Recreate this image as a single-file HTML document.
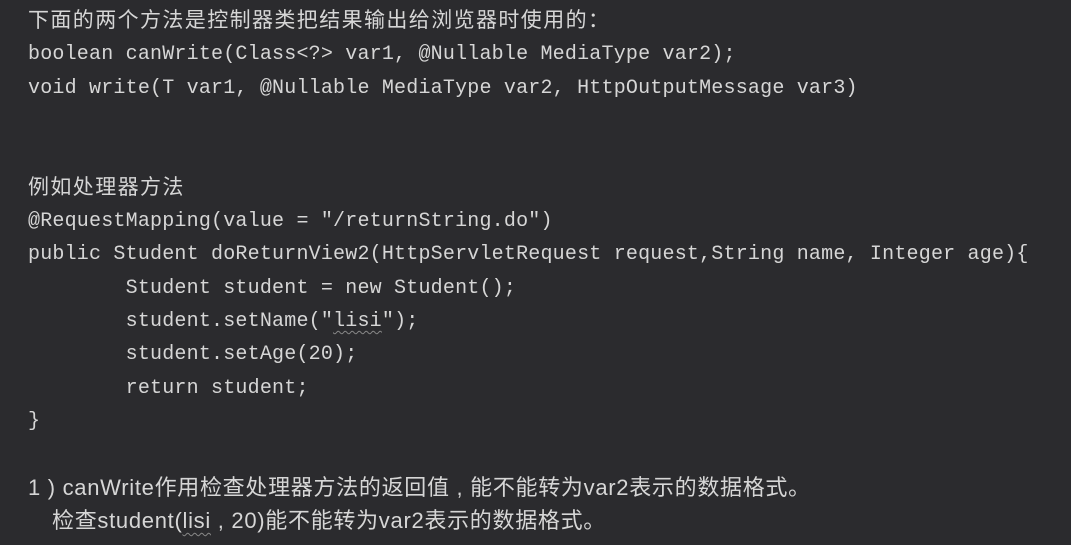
<!DOCTYPE html>
<html><head><meta charset="utf-8"><style>
html,body{margin:0;padding:0;background:#2b2b2e;width:1071px;height:545px;overflow:hidden}
.l{position:absolute;left:28px;white-space:pre;color:#d6d6d6;font-size:20px;line-height:33px;letter-spacing:0.2px;font-family:"Liberation Mono","Noto Sans CJK SC",monospace}
.c{font-family:"Liberation Sans","Noto Sans CJK SC",sans-serif;font-size:21px;letter-spacing:1.4px}
.u{text-decoration:underline wavy #888;text-underline-offset:4px;text-decoration-thickness:1px}
</style></head><body>
<div class="l c" style="top:4px">下面的两个方法是控制器类把结果输出给浏览器时使用的：</div>
<div class="l" style="top:38px">boolean canWrite(Class&lt;?&gt; var1, @Nullable MediaType var2);</div>
<div class="l" style="top:72px">void write(T var1, @Nullable MediaType var2, HttpOutputMessage var3)</div>
<div class="l c" style="top:171px">例如处理器方法</div>
<div class="l" style="top:205px">@RequestMapping(value = "/returnString.do")</div>
<div class="l" style="top:238px">public Student doReturnView2(HttpServletRequest request,String name, Integer age){</div>
<div class="l" style="top:272px">        Student student = new Student();</div>
<div class="l" style="top:305px">        student.setName("<span class="u">lisi</span>");</div>
<div class="l" style="top:338px">        student.setAge(20);</div>
<div class="l" style="top:372px">        return student;</div>
<div class="l" style="top:405px">}</div>
<div class="l c" style="top:471px;font-size:22px;letter-spacing:0.7px">1 ) canWrite作用检查处理器方法的返回值 , 能不能转为var2表示的数据格式。</div>
<div class="l c" style="top:504px;left:52px;font-size:22px;letter-spacing:0.7px">检查student(<span class="u">lisi</span> , 20)能不能转为var2表示的数据格式。</div>
</body></html>
